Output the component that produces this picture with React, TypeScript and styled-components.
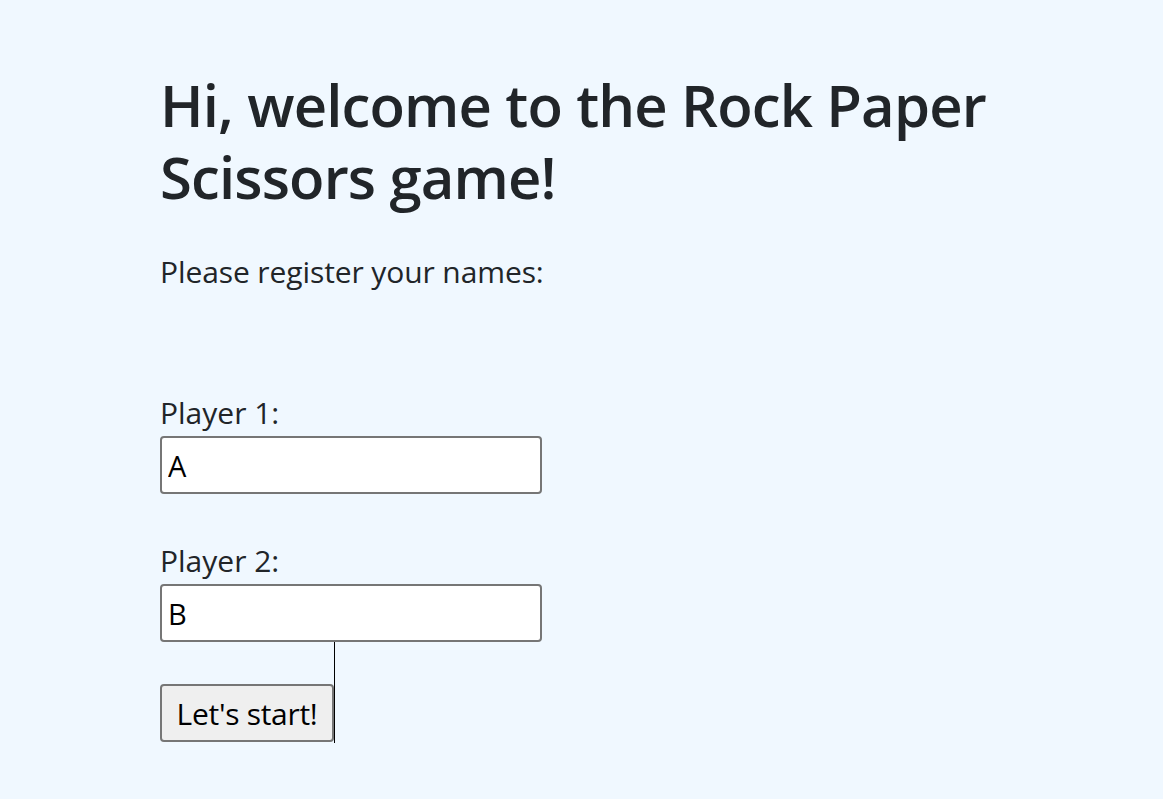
import React from "react";
import styled, { createGlobalStyle } from "styled-components";

const GlobalStyle = createGlobalStyle`
  html, body {
    margin: 0;
    padding: 0;
    background: #f0f8ff;
  }
  body {
    font-family: "Open Sans", "Noto Sans", sans-serif;
    color: #212529;
  }
`;

const Page = styled.main`
  min-height: 799px;
  box-sizing: border-box;
  padding: 69px 0 0 160px;
  background: #f0f8ff;
`;

const Title = styled.h1`
  margin: 0;
  max-width: 843px;
  font-size: 58px;
  line-height: 72px;
  font-weight: 600;
  letter-spacing: -0.85px;
  color: #212529;
`;

const Intro = styled.p`
  margin: 36px 0 0;
  font-size: 30px;
  line-height: 45px;
  letter-spacing: -0.1px;
  color: #212529;
`;

const Form = styled.form`
  display: flex;
  flex-direction: column;
  margin-top: 96px;
`;

const Field = styled.div<{ $gap?: number }>`
  display: flex;
  flex-direction: column;
  margin-top: ${(p) => p.$gap ?? 0}px;
`;

const Label = styled.label`
  font-size: 30px;
  line-height: 45px;
  color: #212529;
  margin-bottom: 1px;
`;

const TextInput = styled.input`
  box-sizing: border-box;
  width: 382px;
  height: 58px;
  margin: 0;
  padding: 0 6px;
  border: 2px solid #767676;
  border-radius: 4px;
  background: #ffffff;
  font-family: "Open Sans", "Noto Sans", sans-serif;
  font-size: 29px;
  color: #000000;
  outline: none;
`;

const SubmitRow = styled.div`
  box-sizing: border-box;
  width: 175px;
  height: 101px;
  border-right: 1px solid #000000;
  display: flex;
  align-items: flex-end;
  padding-bottom: 1px;
`;

const StartButton = styled.button`
  box-sizing: border-box;
  width: 174px;
  height: 58px;
  margin: 0;
  padding: 0 8px;
  border: 2px solid #767676;
  border-radius: 4px;
  background: #efefef;
  font-family: "Open Sans", "Noto Sans", sans-serif;
  font-size: 30px;
  letter-spacing: -0.3px;
  color: #000000;
  white-space: nowrap;
  cursor: pointer;
`;

export default function App() {
  return (
    <>
      <GlobalStyle />
      <Page>
        <Title>Hi, welcome to the Rock Paper Scissors game!</Title>
        <Intro>Please register your names:</Intro>
        <Form onSubmit={(e) => e.preventDefault()}>
          <Field>
            <Label htmlFor="p1">Player 1:</Label>
            <TextInput id="p1" type="text" defaultValue="A" />
          </Field>
          <Field $gap={44}>
            <Label htmlFor="p2">Player 2:</Label>
            <TextInput id="p2" type="text" defaultValue="B" />
          </Field>
          <SubmitRow>
            <StartButton type="submit">Let's start!</StartButton>
          </SubmitRow>
        </Form>
      </Page>
    </>
  );
}
